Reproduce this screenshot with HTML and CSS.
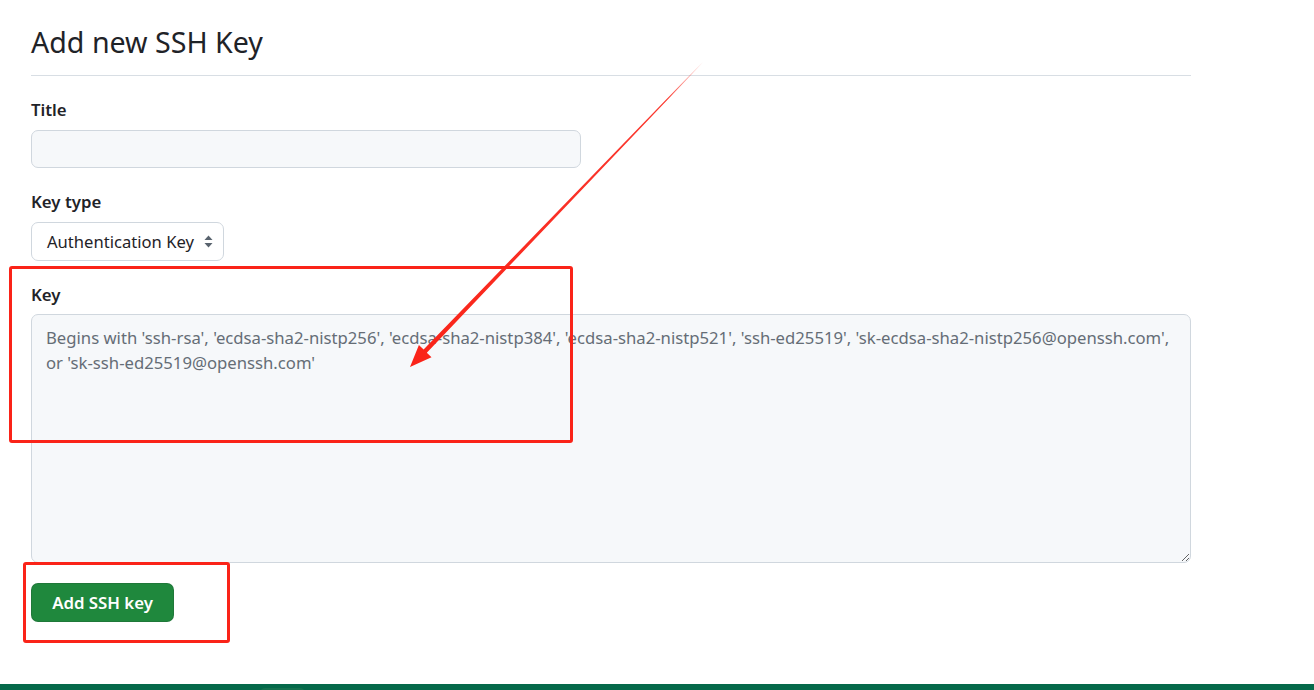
FILE: index.html
```html
<!DOCTYPE html>
<html lang="en">
<head>
<meta charset="utf-8">
<title>Add new SSH Key</title>
<link rel="stylesheet" href="styles.css">
</head>
<body>
<main class="page">
  <div class="subhead">
    <h2 class="subhead-heading">Add new SSH Key</h2>
  </div>
  <form class="ssh-form">
    <div class="form-group">
      <label class="form-label" for="title">Title</label>
      <input class="form-control title-input" id="title" type="text">
    </div>
    <div class="form-group">
      <label class="form-label" for="type">Key type</label>
      <div class="select" id="type">
        <span class="select-value">Authentication Key</span>
        <svg class="select-icon" width="9" height="13" viewBox="0 0 9 13" aria-hidden="true">
          <path d="M4.5 0.5 L8.5 5 L0.5 5 Z" fill="#59636e"/>
          <path d="M0.5 8 L8.5 8 L4.5 12.5 Z" fill="#59636e"/>
        </svg>
      </div>
    </div>
    <div class="form-group">
      <label class="form-label form-label-tight" for="key">Key</label>
      <textarea class="form-control key-input" id="key" placeholder="Begins with 'ssh-rsa', 'ecdsa-sha2-nistp256', 'ecdsa-sha2-nistp384', 'ecdsa-sha2-nistp521', 'ssh-ed25519', 'sk-ecdsa-sha2-nistp256@openssh.com', or 'sk-ssh-ed25519@openssh.com'"></textarea>
    </div>
    <button class="btn-primary" type="button">Add SSH key</button>
  </form>
</main>
<footer class="footer"><span class="footer-tab"></span></footer>

<div class="annot annot-key"></div>
<div class="annot annot-btn"></div>
<svg class="arrow" width="1314" height="690" viewBox="0 0 1314 690" aria-hidden="true">
  <defs>
    <linearGradient id="fade" gradientUnits="userSpaceOnUse" x1="703" y1="62" x2="410" y2="367">
      <stop offset="0" stop-color="#fa2318" stop-opacity="0"/>
      <stop offset="0.12" stop-color="#fa2318" stop-opacity="0.9"/>
      <stop offset="1" stop-color="#fa2318" stop-opacity="1"/>
    </linearGradient>
  </defs>
  <polygon fill="url(#fade)" points="702.8,61.8 703.2,62.2 426.8,352.7 431.5,357.2 410,367 418.9,345.1 423.6,349.5"/>
</svg>
</body>
</html>
```

FILE: styles.css
```css
html, body {
  margin: 0;
  padding: 0;
}

body {
  background: #ffffff;
  color: #1f2328;
  font-family: "Noto Sans", "Liberation Sans", sans-serif;
  height: 690px;
  overflow: hidden;
  position: relative;
}

.page {
  width: 1160px;
  padding: 24px 0 0 31px;
}

.subhead {
  padding-bottom: 15px;
  border-bottom: 1px solid #d8dee4;
}

.subhead-heading {
  margin: 0;
  font-size: 28.6px;
  font-weight: 400;
  line-height: 36px;
}

.ssh-form {
  display: flex;
  flex-direction: column;
  align-items: flex-start;
}

.form-group {
  margin-top: 23px;
  display: flex;
  flex-direction: column;
  align-items: flex-start;
}

.form-label {
  font-size: 16.8px;
  font-weight: 600;
  line-height: 21px;
  margin-bottom: 10px;
}

.form-label-tight {
  margin-bottom: 9px;
}

.form-control {
  box-sizing: border-box;
  background: #f6f8fa;
  border: 1px solid #d0d7de;
  border-radius: 7px;
  font-family: inherit;
  color: #1f2328;
  outline: none;
}

.title-input {
  width: 550px;
  height: 38px;
}

.select {
  box-sizing: border-box;
  width: 193px;
  height: 39px;
  border: 1px solid #d0d7de;
  border-radius: 7px;
  background: #ffffff;
  display: flex;
  align-items: center;
  justify-content: space-between;
  padding: 0 10px 0 15px;
  font-size: 16.6px;
  color: #1f2328;
}

.select-icon {
  display: block;
}

.key-input {
  display: block;
  width: 1160px;
  height: 249px;
  padding: 11px 14px;
  font-size: 16.7px;
  line-height: 24.5px;
  resize: vertical;
}

.key-input::placeholder {
  color: #656d76;
  opacity: 1;
}

.btn-primary {
  margin-top: 20px;
  box-sizing: border-box;
  height: 39px;
  width: 143px;
  padding: 0;
  border: 1px solid rgba(31, 35, 40, 0.15);
  border-radius: 7px;
  background: #1f883d;
  color: #ffffff;
  font-family: inherit;
  font-size: 16.8px;
  font-weight: 600;
}

.footer {
  margin-top: 62px;
  height: 6px;
  background: #05694a;
  position: relative;
  overflow: hidden;
}

.footer-tab {
  position: absolute;
  left: 260px;
  top: 4px;
  width: 45px;
  height: 20px;
  border-radius: 5px;
  background: #15724f;
}

.annot {
  position: absolute;
  box-sizing: border-box;
  border: 3px solid #fa2318;
  border-radius: 3px;
}

.annot-key {
  left: 9px;
  top: 266px;
  width: 564px;
  height: 177px;
}

.annot-btn {
  left: 23px;
  top: 562px;
  width: 207px;
  height: 81px;
}

.arrow {
  position: absolute;
  left: 0;
  top: 0;
  pointer-events: none;
}
```
